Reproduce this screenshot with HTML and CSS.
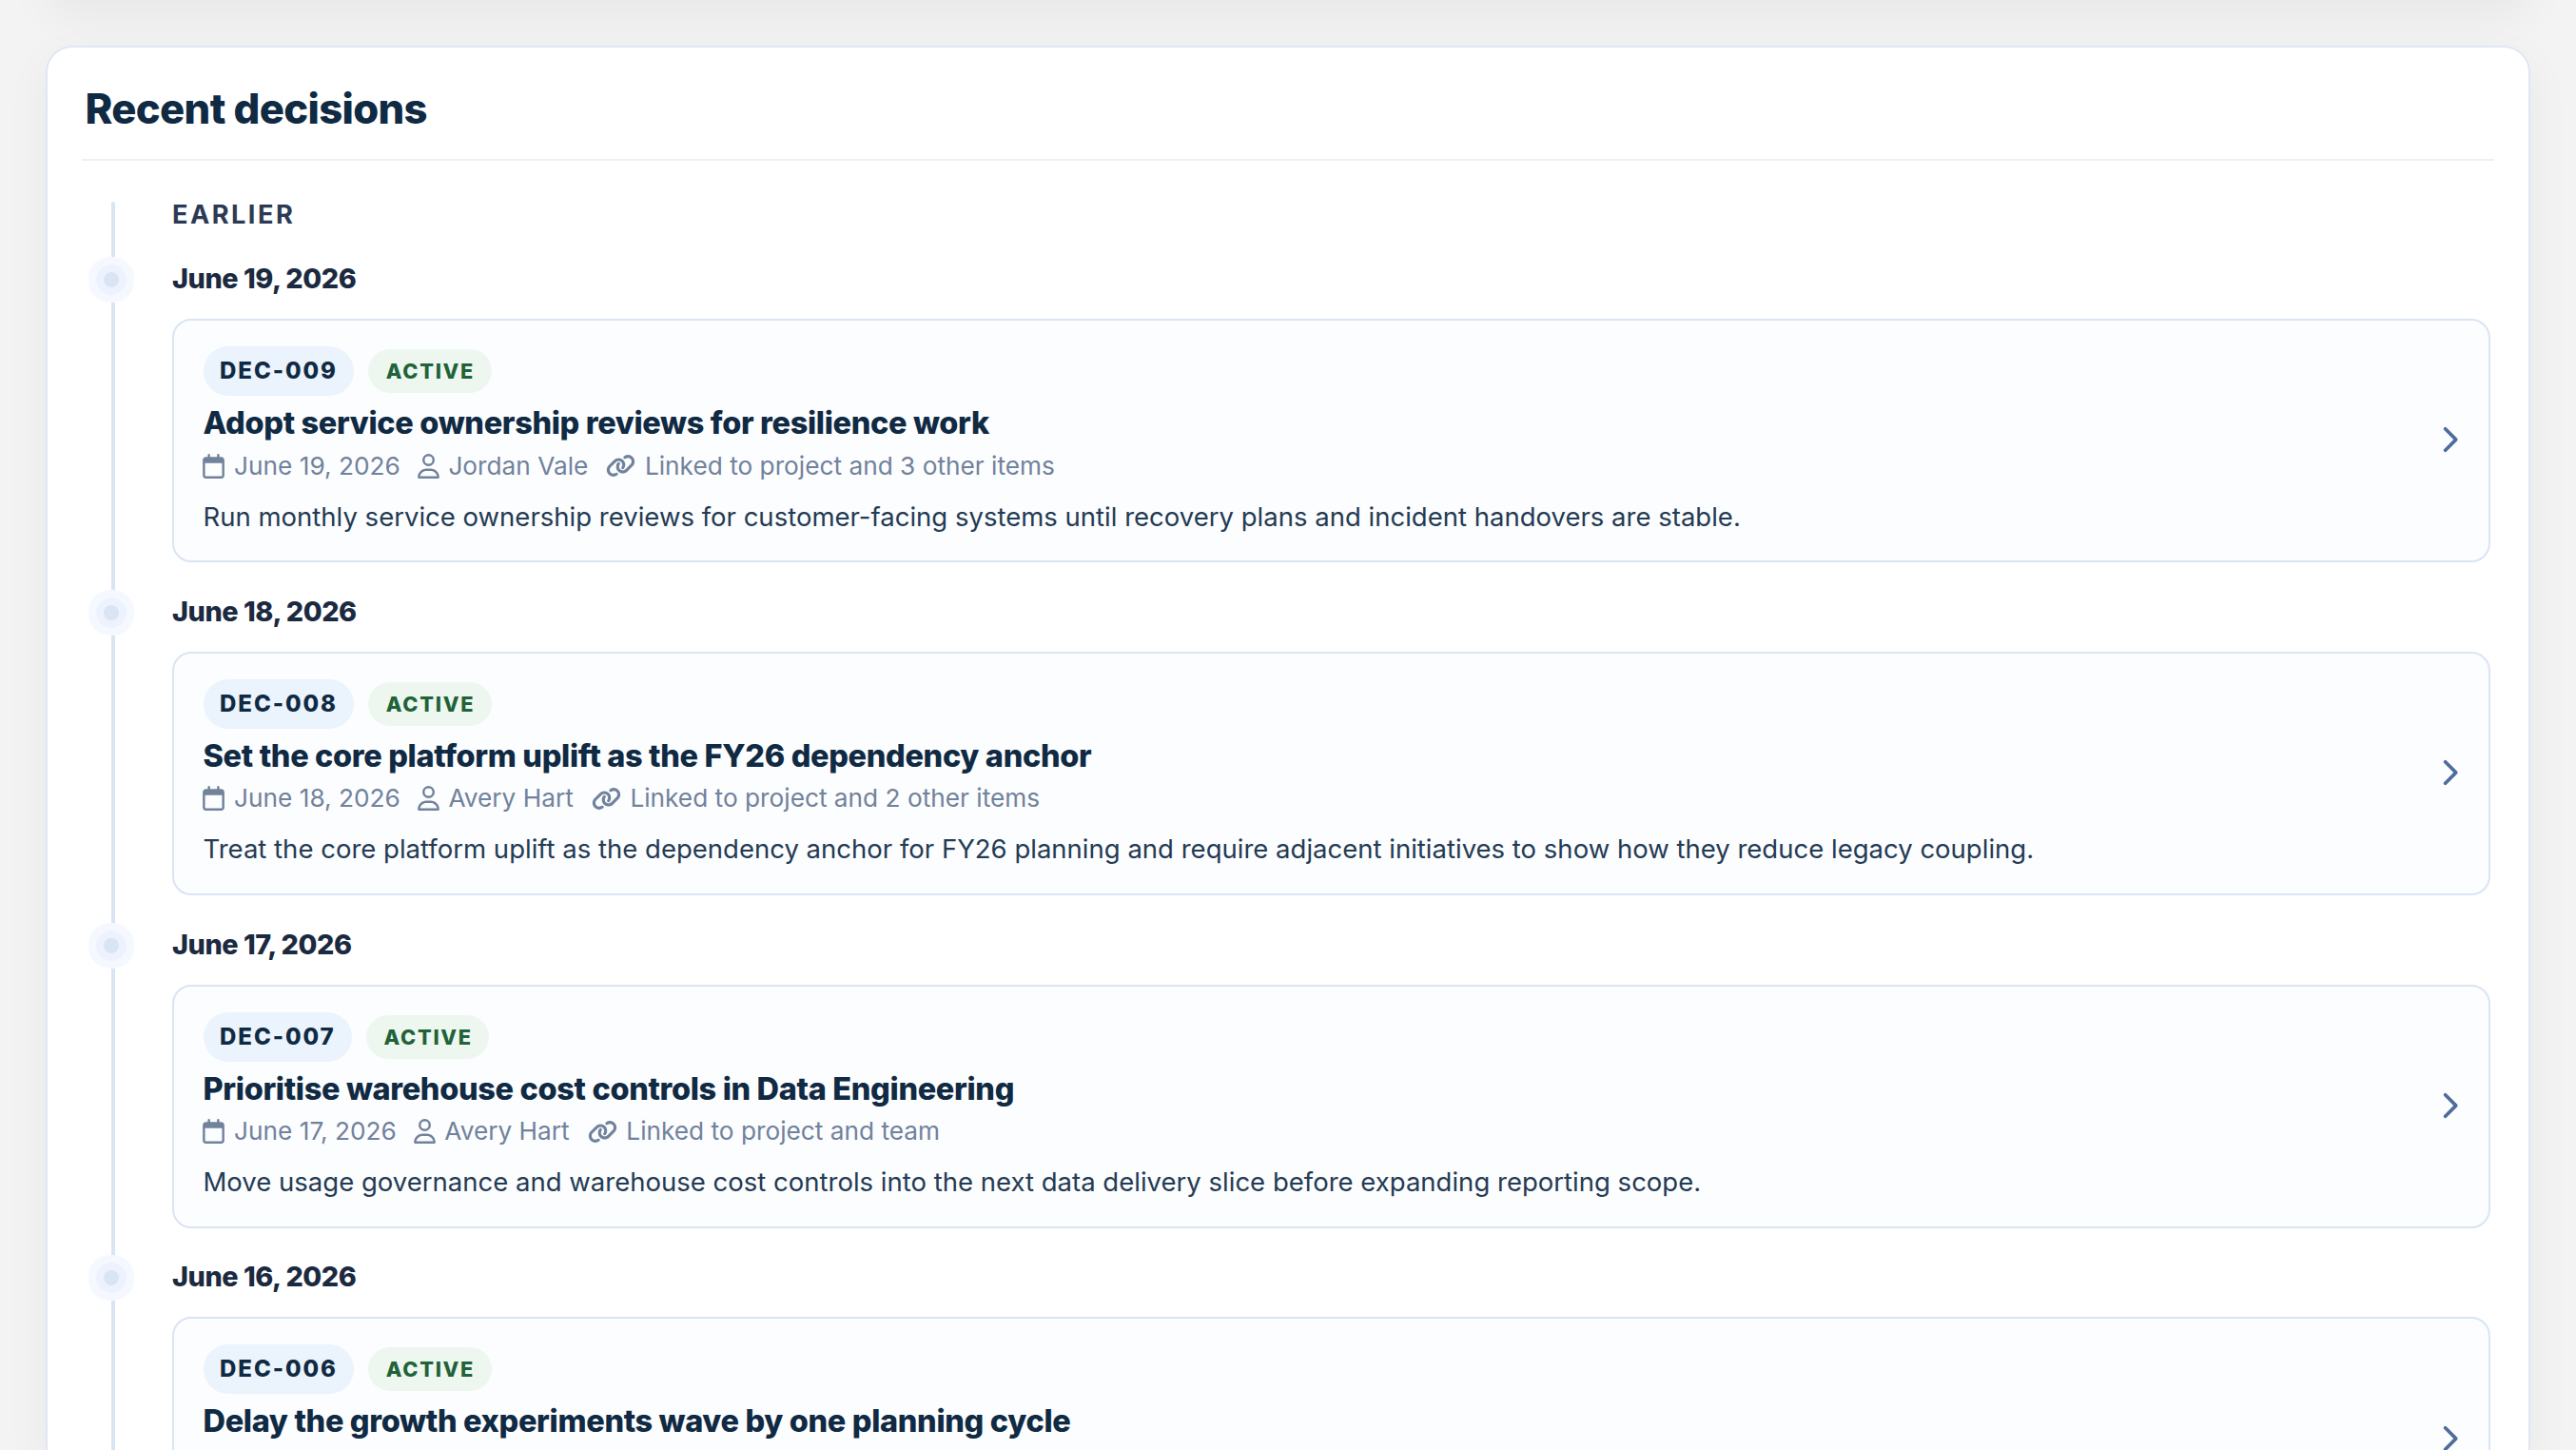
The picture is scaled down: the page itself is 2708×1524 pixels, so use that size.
FILE: index.html
```
<!DOCTYPE html>
<html lang="en">
<head>
    <meta charset="UTF-8">
    <meta name="viewport" content="width=device-width, initial-scale=1.0">
    <title>Recent decisions</title>
    <link rel="stylesheet" href="styles.css">
</head>
<body>
    <!-- shared icons -->
    <svg class="sprite" width="0" height="0">
        <symbol id="i-calendar" viewBox="0 0 448 512"><path fill-rule="evenodd" d="M152 24a24 24 0 0 0-48 0v40H64C28.700 64 0 92.700 0 128v320c0 35.300 28.700 64 64 64h320c35.300 0 64-28.700 64-64V128c0-35.300-28.700-64-64-64h-40V24a24 24 0 0 0-48 0v40H152zM48 192h352v256a16 16 0 0 1-16 16H64a16 16 0 0 1-16-16z"/></symbol>
        <symbol id="i-user" viewBox="0 0 448 512"><path fill-rule="evenodd" d="M304 128a80 80 0 1 0-160 0 80 80 0 1 0 160 0zM96 128a128 128 0 1 1 256 0 128 128 0 1 1-256 0zM49.300 464h349.400c-8.900-63.300-63.300-112-129-112h-91.400c-65.700 0-120.100 48.700-129 112zM0 482.300C0 383.800 79.800 304 178.300 304h91.400C368.200 304 448 383.800 448 482.300c0 16.400-13.300 29.700-29.700 29.700H29.700C13.300 512 0 498.700 0 482.300z"/></symbol>
        <symbol id="i-link" viewBox="0 0 640 512"><path d="M579.800 267.700c56.500-56.500 56.500-148 0-204.500-50-50-128.800-56.500-186.300-15.400l-1.600 1.100c-14.400 10.300-17.700 30.300-7.400 44.600s30.300 17.700 44.600 7.400l1.600-1.100c32.100-22.900 76-19.300 103.800 8.600 31.500 31.500 31.500 82.500 0 114L422.300 334.800c-31.500 31.500-82.500 31.500-114 0-27.900-27.900-31.500-71.800-8.600-103.800l1.100-1.600c10.300-14.400 6.900-34.400-7.400-44.600s-34.400-6.900-44.600 7.400l-1.100 1.600C206.500 251.200 213 330 263 380c56.500 56.500 148 56.500 204.500 0zM60.200 244.300c-56.500 56.500-56.500 148 0 204.500 50 50 128.800 56.500 186.300 15.400l1.600-1.100c14.400-10.300 17.700-30.300 7.400-44.600s-30.300-17.700-44.600-7.400l-1.600 1.100c-32.100 22.900-76 19.300-103.800-8.600C74 372 74 321 105.500 289.500L217.700 177.200c31.500-31.500 82.500-31.500 114 0 27.900 27.900 31.500 71.800 8.600 103.900l-1.100 1.600c-10.300 14.400-6.900 34.400 7.400 44.600s34.400 6.900 44.600-7.400l1.100-1.600C433.500 260.800 427 182 377 132c-56.500-56.500-148-56.500-204.500 0z"/></symbol>
        <symbol id="i-chevron" viewBox="0 0 320 512"><path d="M310.600 233.400c12.500 12.500 12.500 32.800 0 45.300l-192 192c-12.500 12.500-32.800 12.500-45.300 0s-12.500-32.800 0-45.300L242.700 256 73.400 86.600c-12.500-12.500-12.500-32.800 0-45.300s32.800-12.500 45.300 0l192 192z"/></symbol>
    </svg>

    <section class="panel panel-prev"></section>

    <section class="panel">
        <h2 class="panel-title">Recent decisions</h2>
        <div class="timeline">
            <div class="timeline-label">Earlier</div>

            <div class="timeline-item">
                <h3 class="timeline-date">June 19, 2026</h3>
                <div class="decision-card">
                    <div class="decision-body">
                        <div class="decision-tags"><span class="code">DEC-009</span><span class="status">Active</span></div>
                        <h4 class="decision-title">Adopt service ownership reviews for resilience work</h4>
                        <div class="decision-meta">
                            <span class="meta"><svg class="icon icon-calendar"><use href="#i-calendar"/></svg>June 19, 2026</span>
                            <span class="meta"><svg class="icon"><use href="#i-user"/></svg>Jordan Vale</span>
                            <span class="meta"><svg class="icon icon-link"><use href="#i-link"/></svg>Linked to project and 3 other items</span>
                        </div>
                        <p class="decision-text">Run monthly service ownership reviews for customer-facing systems until recovery plans and incident handovers are stable.</p>
                    </div>
                    <svg class="chevron"><use href="#i-chevron"/></svg>
                </div>
            </div>

            <div class="timeline-item">
                <h3 class="timeline-date">June 18, 2026</h3>
                <div class="decision-card">
                    <div class="decision-body">
                        <div class="decision-tags"><span class="code">DEC-008</span><span class="status">Active</span></div>
                        <h4 class="decision-title">Set the core platform uplift as the FY26 dependency anchor</h4>
                        <div class="decision-meta">
                            <span class="meta"><svg class="icon icon-calendar"><use href="#i-calendar"/></svg>June 18, 2026</span>
                            <span class="meta"><svg class="icon"><use href="#i-user"/></svg>Avery Hart</span>
                            <span class="meta"><svg class="icon icon-link"><use href="#i-link"/></svg>Linked to project and 2 other items</span>
                        </div>
                        <p class="decision-text">Treat the core platform uplift as the dependency anchor for FY26 planning and require adjacent initiatives to show how they reduce legacy coupling.</p>
                    </div>
                    <svg class="chevron"><use href="#i-chevron"/></svg>
                </div>
            </div>

            <div class="timeline-item">
                <h3 class="timeline-date">June 17, 2026</h3>
                <div class="decision-card">
                    <div class="decision-body">
                        <div class="decision-tags"><span class="code">DEC-007</span><span class="status">Active</span></div>
                        <h4 class="decision-title">Prioritise warehouse cost controls in Data Engineering</h4>
                        <div class="decision-meta">
                            <span class="meta"><svg class="icon icon-calendar"><use href="#i-calendar"/></svg>June 17, 2026</span>
                            <span class="meta"><svg class="icon"><use href="#i-user"/></svg>Avery Hart</span>
                            <span class="meta"><svg class="icon icon-link"><use href="#i-link"/></svg>Linked to project and team</span>
                        </div>
                        <p class="decision-text">Move usage governance and warehouse cost controls into the next data delivery slice before expanding reporting scope.</p>
                    </div>
                    <svg class="chevron"><use href="#i-chevron"/></svg>
                </div>
            </div>

            <div class="timeline-item timeline-item-last">
                <h3 class="timeline-date">June 16, 2026</h3>
                <div class="decision-card">
                    <div class="decision-body">
                        <div class="decision-tags"><span class="code">DEC-006</span><span class="status">Active</span></div>
                        <h4 class="decision-title">Delay the growth experiments wave by one planning cycle</h4>
                    </div>
                    <svg class="chevron"><use href="#i-chevron"/></svg>
                </div>
            </div>
        </div>
    </section>
</body>
</html>
```
FILE: styles.css
```
* {
    box-sizing: border-box;
}
body {
    font-family: Inter, "Liberation Sans", sans-serif;
    background: #f3f3f3;
    color: #102a43;
    margin: 0;
    padding: 0 48px;
    height: 1524px;
    overflow: hidden;
}
h2, h3, h4, p {
    margin: 0;
}
.sprite {
    display: block;
}
.panel {
    background: #fff;
    border: 2px solid #e0e6f2;
    border-radius: 28px;
    box-shadow: 0 16px 48px rgba(0, 0, 0, 0.05);
    padding: 0 36px;
}
.panel:last-child {
    height: 1476px;
    border-bottom: 0;
    border-radius: 28px 28px 0 0;
    overflow: hidden;
}
.panel-prev {
    height: 200px;
    margin-top: -200px;
    margin-bottom: 48px;
}
.panel-title {
    font-size: 43.6px;
    line-height: 50px;
    font-weight: 800;
    letter-spacing: -0.015em;
    padding: 40px 3.5px 27px;
    border-bottom: 2px solid #ebf1f8;
}
.timeline {
    position: relative;
    padding: 43px 4px 0 95px;
}
.timeline::before {
    content: "";
    position: absolute;
    left: 31px;
    top: 43px;
    bottom: 0;
    width: 4px;
    border-radius: 2px;
    background: #d9e5f2;
}
.timeline-label {
    color: #2d3a54;
    font-size: 27.2px;
    line-height: 28px;
    font-weight: 700;
    letter-spacing: 0.09em;
    text-transform: uppercase;
}
.timeline-item {
    height: 349.8px;
    padding-top: 36px;
}
.timeline-item-last {
    height: 320px;
}
.timeline-date {
    position: relative;
    color: #1b2a41;
    font-size: 28.8px;
    line-height: 36px;
    font-weight: 800;
    letter-spacing: -0.015em;
    padding-bottom: 1px;
    margin: -1px 0 23px;
}
/* timeline marker */
.timeline-date::before {
    content: "";
    position: absolute;
    left: -72px;
    top: 11px;
    width: 16px;
    height: 16px;
    border-radius: 50%;
    background: #d9e5f2;
    box-shadow: 0 0 0 8px #eef2ff, 0 0 0 16px #f5f9ff;
}
.decision-card {
    display: flex;
    align-items: center;
    height: 256px;
    padding: 0 32px 0 30.5px;
    background: #fcfdff;
    border: 2px solid #d9e5f2;
    border-radius: 20px;
}
.decision-body {
    flex: 1;
    height: 100%;
    padding-top: 27px;
}
.decision-tags {
    display: flex;
    align-items: center;
    gap: 15px;
}
.code,
.status {
    border-radius: 999px;
    font-weight: 800;
    white-space: nowrap;
}
.code {
    height: 52px;
    padding: 0 17px 0 17.6px;
    line-height: 52px;
    font-size: 24px;
    letter-spacing: 0.08em;
    background: #ebf3fc;
}
.status {
    height: 46px;
    padding: 0 17.6px 0 19px;
    line-height: 46px;
    font-size: 21.76px;
    letter-spacing: 0.08em;
    text-transform: uppercase;
    color: #216239;
    background: #edf7ef;
}
.decision-title {
    margin-top: 9px;
    font-size: 32.48px;
    line-height: 40px;
    font-weight: 800;
    letter-spacing: -0.01em;
}
.decision-meta {
    display: flex;
    align-items: center;
    gap: 18px;
    margin-top: 8.5px;
    color: #71829b;
    font-size: 26.24px;
    line-height: 32px;
}
.meta {
    display: flex;
    align-items: center;
    gap: 9.6px;
}
.icon {
    width: 23px;
    height: 26px;
    fill: currentColor;
}
.icon-calendar {
    margin-left: -0.7px;
    margin-right: 0.7px;
}
.icon-link {
    width: 31px;
    height: 25px;
    margin-left: 1px;
}
.decision-text {
    margin-top: 16px;
    color: #243b53;
    font-size: 27.52px;
    line-height: 42px;
}
.chevron {
    width: 18.75px;
    height: 30px;
    margin-bottom: 1.5px;
    fill: #4f6d9b;
}
```
